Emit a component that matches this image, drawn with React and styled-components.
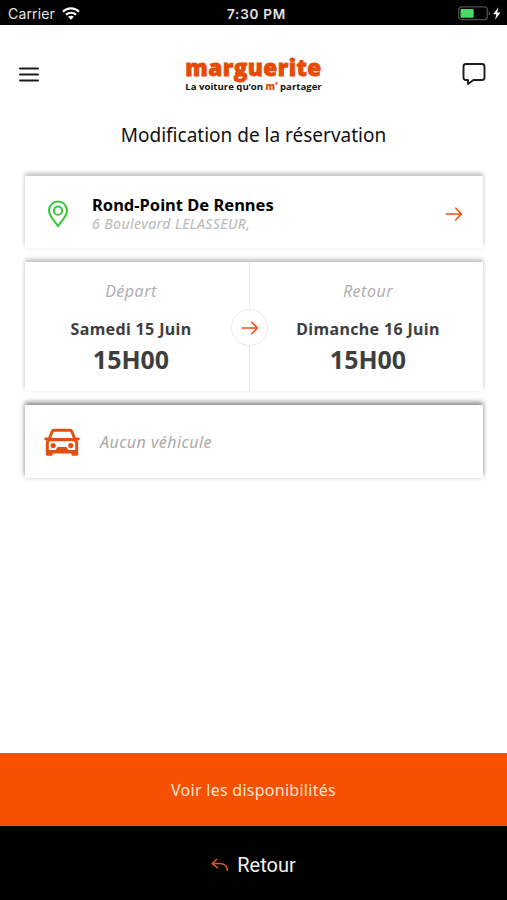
import styled, { createGlobalStyle } from 'styled-components';

const GlobalStyle = createGlobalStyle`
  * {
    box-sizing: border-box;
  }

  body {
    margin: 0;
    background: #fff;
    font-family: 'Noto Sans', 'Open Sans', sans-serif;
  }

  h1, h2, p {
    margin: 0;
    font-weight: normal;
  }

  button {
    border: 0;
    padding: 0;
    background: none;
    font-family: inherit;
  }

  svg {
    display: block;
    flex: none;
  }
`;

const ArrowRight = ({ size }) => (
  <svg width={size} height={size} viewBox="0 0 18 18" fill="none" stroke="#f4500c" strokeWidth="1.6" strokeLinecap="round">
    <path d="M1.2 9H16.4M10.8 3.2L16.4 9L10.8 14.8" />
  </svg>
);

const WifiIcon = () => (
  <svg width="18" height="13" viewBox="0 0 18 13" fill="none" stroke="#fff" strokeWidth="2.1">
    <path d="M1 4.8C5.4 .2 12.6 .2 17 4.8M4 7.8C6.8 5 11.2 5 14 7.8" />
    <path d="M6.1 9.8C7.7 8.3 10.3 8.3 11.9 9.8L9 12.7Z" fill="#fff" stroke="none" />
  </svg>
);

const BatteryIcon = () => (
  <svg width="43" height="15" viewBox="0 0 43 15">
    <rect x=".7" y=".9" width="28.6" height="12.8" rx="3" fill="none" stroke="#4c4c4c" strokeWidth="1.3" />
    <rect x="2.5" y="2.9" width="13.2" height="8.8" rx="1" fill="#4cd964" />
    <path d="M30.6 5v4.6q1.6-.7 1.6-2.3T30.6 5" fill="#4c4c4c" />
    <path d="M40.4 1.3L35.2 8.2h3.1l-1.2 5.6 5.4-7.4h-3.3z" fill="#fff" />
  </svg>
);

const MenuIcon = () => (
  <svg width="22" height="17" viewBox="0 0 22 17" stroke="#1c1c1c" strokeWidth="2" strokeLinecap="round">
    <path d="M2 2.4H20M2 8.4H20M2 14.4H20" />
  </svg>
);

const ChatIcon = () => (
  <svg width="24" height="24" viewBox="0 0 24 24" fill="none" stroke="#1c1c1c" strokeWidth="1.9" strokeLinejoin="round">
    <path d="M4 2H20Q22.5 2 22.5 4.5V15.5Q22.5 18 20 18H11.5L6 22V18H4Q1.5 18 1.5 15.5V4.5Q1.5 2 4 2Z" />
  </svg>
);

const PinIcon = () => (
  <svg width="22" height="28" viewBox="0 0 22 28" fill="none" stroke="#35c63a" strokeWidth="2" strokeLinejoin="round">
    <path d="M11 26.2C8.5 22.2 2 16.5 2 10.5A9 9 0 0 1 20 10.5C20 16.5 13.5 22.2 11 26.2Z" />
    <circle cx="11" cy="10.7" r="4.1" />
  </svg>
);

const CarIcon = () => (
  <svg width="36" height="29" viewBox="0 0 36 29" fill="#e2500f">
    <path
      fillRule="evenodd"
      d="M10.2 .8H25.8Q28.4 .8 29.3 3.2L31.8 9.6H34.6Q35.7 9.6 35.7 11T34.6 12.4H33.3Q34.2 13.4 34.2 15V26.5Q34.2 27.8 32.9 27.8H28.7Q27.4 27.8 27.4 26.5V25.6H8.6V26.5Q8.6 27.8 7.3 27.8H3.1Q1.8 27.8 1.8 26.5V15Q1.8 13.4 2.7 12.4H1.4Q.3 12.4 .3 11T1.4 9.6H4.2L6.7 3.2Q7.6 .8 10.2 .8ZM10.6 3.8Q9.6 3.8 9.2 4.8L7.2 10H28.8L26.8 4.8Q26.4 3.8 25.4 3.8ZM6.9 13.2Q4.8 13.2 4.8 15.3V22H11.6L13.6 19H22.4L24.4 22H31.2V15.3Q31.2 13.2 29.1 13.2Z"
    />
    <circle cx="9.2" cy="17.6" r="2.6" />
    <circle cx="26.8" cy="17.6" r="2.6" />
  </svg>
);

const ReplyIcon = () => (
  <svg width="18" height="14" viewBox="0 0 18 14" fill="none" stroke="#dd531d" strokeWidth="1.5" strokeLinecap="round">
    <path d="M5.8 1.3L1.2 5.6L6.6 9.9M1.4 5.6H8.5Q16 5.6 16.4 12.6" />
  </svg>
);

const Leg = ({ label, day, time }) => (
  <LegColumn>
    <LegLabel>{label}</LegLabel>
    <LegDay>{day}</LegDay>
    <LegTime>{time}</LegTime>
  </LegColumn>
);

const App = () => {
  return (
    <Screen>
      <GlobalStyle />
      <StatusBar>
        <Carrier>
          Carrier
          <WifiIcon />
        </Carrier>
        <Clock>7:30 PM</Clock>
        <Battery>
          <BatteryIcon />
        </Battery>
      </StatusBar>
      <Header>
        <button aria-label="Menu">
          <MenuIcon />
        </button>
        <Logo>
          <Brand>marguerite</Brand>
          <Tagline>
            La voiture qu’on <span>m’</span> partager
          </Tagline>
        </Logo>
        <button aria-label="Messages">
          <ChatIcon />
        </button>
      </Header>
      <Title>Modification de la réservation</Title>
      <Cards>
        <StationCard>
          <PinIcon />
          <Station>
            <StationName>Rond-Point De Rennes</StationName>
            <Address>6 Boulevard LELASSEUR,</Address>
          </Station>
          <ArrowRight size={18} />
        </StationCard>
        <DatesCard>
          <Leg label="Départ" day="Samedi 15 Juin" time="15H00" />
          <Divider>
            <ArrowBadge>
              <ArrowRight size={18} />
            </ArrowBadge>
          </Divider>
          <Leg label="Retour" day="Dimanche 16 Juin" time="15H00" />
        </DatesCard>
        <VehicleCard>
          <CarIcon />
          <VehicleText>Aucun véhicule</VehicleText>
        </VehicleCard>
      </Cards>
      <SearchButton>Voir les disponibilités</SearchButton>
      <BackButton>
        <ReplyIcon />
        Retour
      </BackButton>
    </Screen>
  );
};

const Screen = styled.main`
  display: flex;
  flex-direction: column;
  height: 900px;
  width: 507px;
  overflow: hidden;
`;

const StatusBar = styled.div`
  display: grid;
  grid-template-columns: 1fr auto 1fr;
  align-items: center;
  height: 25px;
  padding: 2px 6px 0 8px;
  background: #000;
  color: #e6e6e6;
  font-family: Inter, sans-serif;
  font-size: 14px;
`;

const Carrier = styled.div`
  display: flex;
  align-items: center;
  gap: 7px;
  letter-spacing: 0.15px;
`;

const Clock = styled.div`
  margin-left: 4px;
  font-weight: 600;
  font-size: 13.5px;
  letter-spacing: 0.75px;
`;

const Battery = styled.div`
  display: flex;
  justify-content: flex-end;
`;

const Header = styled.header`
  display: flex;
  align-items: flex-start;
  justify-content: space-between;
  height: 91px;
  padding: 0 21px 0 18px;

  button {
    margin-top: 37px;
  }

  button:first-child {
    margin-top: 41px;
  }
`;

const Logo = styled.div`
  display: flex;
  flex-direction: column;
  align-items: center;
  margin: 29px 0 0 5px;
  white-space: nowrap;
`;

const Brand = styled.div`
  color: #e64a05;
  font-family: 'Open Sans', sans-serif;
  font-size: 22.5px;
  line-height: 27px;
  font-weight: 800;
  letter-spacing: 0.45px;
  -webkit-text-stroke: 0.8px #e64a05;
`;

const Tagline = styled.div`
  color: #111;
  font-family: 'Open Sans', sans-serif;
  font-size: 9.6px;
  line-height: 12px;
  font-weight: 700;

  span {
    color: #e64a05;
    font-weight: 800;
  }
`;

const Title = styled.h1`
  height: 60px;
  color: #111;
  font-size: 19px;
  line-height: 38px;
  text-align: center;
`;

const Cards = styled.div`
  display: flex;
  flex-direction: column;
  gap: 14px;
  padding: 0 24px 0 25px;
`;

const Card = styled.section`
  display: flex;
  align-items: center;
  background: #fff;
  box-shadow: 0 -3px 4px rgba(0, 0, 0, 0.22), 0 0 7px rgba(0, 0, 0, 0.06);
`;

const StationCard = styled(Card)`
  height: 72px;
  padding: 3px 20px 0 22px;
`;

const Station = styled.div`
  flex: 1;
  margin-left: 23px;
`;

const StationName = styled.h2`
  color: #000;
  font-size: 16.5px;
  line-height: 19px;
  font-weight: 700;
`;

const Address = styled.p`
  color: #b7b7b7;
  font-size: 14px;
  line-height: 19px;
  font-style: italic;
  letter-spacing: 0.45px;
`;

const DatesCard = styled(Card)`
  height: 129px;
  align-items: stretch;
`;

const LegColumn = styled.div`
  display: flex;
  flex: 1;
  flex-direction: column;
  align-items: center;
  padding: 16px 0 0 3px;

  &:first-child {
    flex: 0 0 224px;
    padding: 16px 12px 0 0;
  }
`;

const LegLabel = styled.p`
  color: #b0b0b0;
  font-size: 16px;
  line-height: 26px;
  font-style: italic;
  letter-spacing: 0.5px;
`;

const LegDay = styled.p`
  margin-top: 13px;
  color: #3e3e3e;
  font-size: 16px;
  line-height: 24px;
  font-weight: 700;
  letter-spacing: 0.35px;
`;

const LegTime = styled.p`
  color: #3e3e3e;
  font-size: 25px;
  line-height: 37px;
  font-weight: 700;
`;

const Divider = styled.div`
  display: flex;
  align-items: center;
  justify-content: center;
  width: 1px;
  background: #ebebeb;
`;

const ArrowBadge = styled.div`
  display: flex;
  flex: none;
  align-items: center;
  justify-content: center;
  width: 37px;
  height: 37px;
  margin-top: 2px;
  border: 1px solid #e8e8e8;
  border-radius: 50%;
  background: #fff;
`;

const VehicleCard = styled(Card)`
  height: 73px;
  padding: 1px 19px 0;
  box-shadow: 0 -3px 5px rgba(0, 0, 0, 0.42), 0 0 5px rgba(0, 0, 0, 0.12);
`;

const VehicleText = styled.p`
  margin-left: 20px;
  color: #aaa;
  font-size: 16px;
  font-style: italic;
  letter-spacing: 0.45px;
`;

const SearchButton = styled.button`
  height: 73px;
  margin-top: auto;
  background: #f75000;
  color: #ffe3d1;
  font-size: 16px;
  letter-spacing: 0.27px;
`;

const BackButton = styled.button`
  display: flex;
  align-items: center;
  justify-content: center;
  gap: 8px;
  height: 74px;
  padding-top: 3px;
  background: #000;
  color: #f2f2f2;
  font-family: Roboto, sans-serif;
  font-size: 20px;
`;

export default App;
